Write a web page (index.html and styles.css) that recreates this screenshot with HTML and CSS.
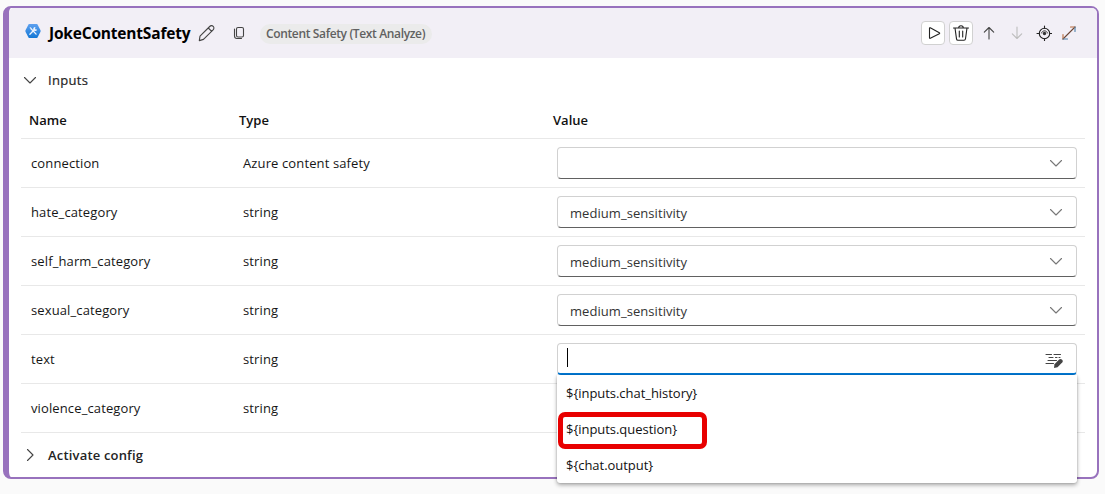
FILE: index.html
```html
<!DOCTYPE html>
<html lang="en">
<head>
<meta charset="utf-8">
<title>JokeContentSafety</title>
<link rel="stylesheet" href="styles.css">
</head>
<body>
<main class="card">
  <header class="head">
    <svg class="tool-icon" width="16" height="16" viewBox="0 0 16 16"><defs><linearGradient id="g" x1="0" y1="0" x2="0" y2="1"><stop offset="0" stop-color="#5ea0ef"/><stop offset="1" stop-color="#1478d6"/></linearGradient></defs><path d="M4.300 1h7.400q.5 0 .8.500l3 5.700q.3.800 0 1.500l-3 5.800q-.3.500-.8.500H4.300q-.5 0-.8-.5l-3-5.800q-.3-.7 0-1.500l3-5.700Q3.800 1 4.300 1Z" fill="url(#g)"/><path d="M4.900 11.200 9 7M6.300 6l4.800 5.100" stroke="#eef5ff" stroke-width="1.300"/><path d="M4.500 4.800 5.400 4 7 5.400 6 6.400Z" fill="#d5e6fb"/><path d="M10.400 4a2 2 0 1 0 1.700 2.400l-1.500.1-.5-.8Z" fill="#eef5ff"/></svg>
    <h1 class="title">JokeContentSafety</h1>
    <svg class="pencil" width="18" height="18" viewBox="0 0 18 18"><path d="m2 12.200 9.700-9.700c1-1 2.500-1.200 3.500-.2s.9 2.500-.1 3.500L5.500 15.400 1.300 16.600ZM10.300 4l3.400 3.400"/></svg>
    <svg class="copy" width="12" height="14" viewBox="0 0 12 14"><rect x="3.500" y="1.500" width="7" height="9.500" rx="1.500"/><path d="M1.500 3v7c0 1.700 1 2.500 2.500 2.500h4.500"/></svg>
    <span class="tag">Content Safety (Text Analyze)</span>
    <div class="actions">
      <button class="btn" aria-label="Run"><svg class="play" width="16" height="16" viewBox="0 0 16 16"><path d="M3.500 3.300v9.500q0 .8.800.5l9-4.600q.8-.5 0-1l-9-4.900q-.8-.3-.8.500Z"/></svg></button>
      <button class="btn" aria-label="Delete"><svg width="18" height="18" viewBox="0 0 18 18"><path d="M1.500 4h15M6.700 4c0-3 4.600-3 4.600 0M3 4l1.500 10.800q.2 1.500 1.500 1.500h6q1.300 0 1.500-1.500L15 4M7.300 7v6M10.700 7v6"/></svg></button>
      <svg class="up" width="12" height="14" viewBox="0 0 12 14"><path d="M6 13V1.500M1.300 6.200 6 1.500l4.700 4.700"/></svg>
      <svg class="down" width="12" height="14" viewBox="0 0 12 14"><path d="M6 1v11.500M1.300 7.800 6 12.500l4.700-4.700"/></svg>
      <svg class="target" width="16" height="16" viewBox="0 0 16 16"><circle cx="8.500" cy="8.500" r="5.200"/><path d="M8.500 1v2.300M8.500 13.700V16M1 8.500h2.300M13.700 8.500H16"/><path d="M5.500 8c1-3 5-3 6 0" stroke-width=".9"/><circle cx="8.500" cy="8.500" r="1.700" fill="#333" stroke="none"/></svg>
      <svg class="expand" width="14" height="14" viewBox="0 0 14 14"><path d="M1 13 13 1" stroke="#6b4636"/><path d="M8.500 1H13M1 8.500V13" stroke="#b8693a"/><path d="M13 1V5.500M1 13h4.500" stroke="#4a7fa8"/></svg>
    </div>
  </header>
  <section class="section-head"><svg width="14" height="14" viewBox="0 0 14 14"><path d="m1.500 4.500 5.500 5.500 5.500-5.500"/></svg><span class="inputs-label">Inputs</span></section>
  <div class="table">
    <div class="row labels"><span>Name</span><span>Type</span><span>Value</span></div>
    <div class="row"><span>connection</span><span>Azure content safety</span><div class="select"><i></i><svg width="14" height="14" viewBox="0 0 14 14"><path d="m1.500 4.500 5.500 5.500 5.500-5.500"/></svg></div></div>
    <div class="row"><span>hate_category</span><span>string</span><div class="select"><b>medium_sensitivity</b><svg width="14" height="14" viewBox="0 0 14 14"><path d="m1.500 4.500 5.500 5.500 5.500-5.500"/></svg></div></div>
    <div class="row"><span>self_harm_category</span><span>string</span><div class="select"><b>medium_sensitivity</b><svg width="14" height="14" viewBox="0 0 14 14"><path d="m1.500 4.500 5.500 5.500 5.500-5.500"/></svg></div></div>
    <div class="row"><span>sexual_category</span><span>string</span><div class="select"><b>medium_sensitivity</b><svg width="14" height="14" viewBox="0 0 14 14"><path d="m1.500 4.500 5.500 5.500 5.500-5.500"/></svg></div></div>
    <div class="row"><span>text</span><span>string</span>
      <div class="select focused"><i class="caret"></i><svg class="edit" width="18" height="16" viewBox="0 0 18 16"><path d="M1 2.500h5.500M9 2.500h6.500M4 5.500h4M10.500 5.500h1.500M14 5.500h1M3 8.500h8.500M1 11.500h7.500"/><path d="m9 16 .5-3.800 4.600-4.600c2-1.700 4.800.9 3.100 2.900L12.500 15.200Z" fill="#444" stroke="none"/></svg>
        <div class="menu"><div>${inputs.chat_history}</div><div class="question">${inputs.question}<em></em></div><div>${chat.output}</div></div>
      </div>
    </div>
    <div class="row"><span>violence_category</span><span>string</span><span></span></div>
  </div>
  <section class="section-head"><svg width="14" height="14" viewBox="0 0 14 14"><path d="m4.500 1.500 5.500 5.500-5.500 5.500"/></svg><span>Activate config</span></section>
</main>
</body>
</html>
```
FILE: styles.css
```css
* { box-sizing: border-box; }
body { margin: 0; padding: 6px 6px 0 3px; height: 494px; overflow: hidden; background: #fafafa; color: #161616; font: 13px/20px "Open Sans", "Noto Sans", sans-serif; }
svg { flex: none; fill: none; stroke: #444; stroke-width: 1.1; stroke-linecap: round; stroke-linejoin: round; }
.card { height: 473px; background: #fff; border: 2px solid #9872bd; border-left-width: 6px; border-radius: 8px; }
.head { display: flex; align-items: center; height: 50px; padding: 0 21px 0 16px; background: #f2eff6; border-radius: 5px 5px 0 0; }
.tool-icon { stroke: none; margin-top: -5px; }
.title { margin: 0 0 0 8px; width: 142px; font-size: 15.5px; line-height: 20px; font-weight: 700; letter-spacing: -.19px; white-space: nowrap; color: #000; }
.pencil { margin-left: 7px; }
.copy { margin-left: 17px; }
.tag { margin: 1px 0 0 15px; width: 172px; height: 20px; padding-left: 6px; border-radius: 10px; background: #ebebeb; color: #616161; font-size: 12px; font-weight: 600; letter-spacing: -.36px; white-space: nowrap; }
.actions { margin-left: auto; display: flex; align-items: center; }
.btn { display: grid; place-items: center; width: 24px; height: 24px; padding: 0; margin-right: 4px; border: 1px solid #d1d1d1; border-radius: 4px; background: #fff; }
.btn svg { stroke: #222; }
.btn .play { margin-left: 1px; }
.up { margin-left: 6px; }
.down { margin-left: 16px; stroke: #bdbdbd; }
.target { margin: 0 10px 0 13px; stroke: #222; }
.section-head { display: flex; align-items: center; height: 44px; padding-left: 14px; gap: 11px; font-weight: 600; letter-spacing: .18px; color: #242424; }
.inputs-label { font-weight: 500; letter-spacing: .3px; -webkit-text-stroke: .2px #242424; }
.table { margin: 0 12px; }
.row { display: grid; grid-template-columns: 212px 314px 520px; align-items: center; height: 49px; padding-left: 10px; border-bottom: 1px solid #e8e8e8; letter-spacing: .12px; color: #161616; }
.labels { height: 37px; grid-template-columns: 210px 314px 1fr; padding-left: 8px; font-weight: 600; letter-spacing: 0; color: #111; }
.select { position: relative; display: flex; align-items: center; justify-content: space-between; height: 32px; padding: 2px 13px 0 12px; border: 1px solid #d1d1d1; border-bottom-color: #616161; border-radius: 4px; background: #fff; }
.select b { font-weight: 400; letter-spacing: .06px; color: #333; }
.select svg { stroke: #777; margin-top: -2px; }
.focused { border-bottom: 2px solid #0078d4; padding-left: 9px; }
.caret { width: 1px; height: 19px; background: #000; margin-top: -5px; }
.focused .edit { stroke: #444; margin-top: 0; }
.menu { position: absolute; z-index: 2; left: -1px; top: 31px; width: 520px; height: 108px; background: #fff; border-radius: 0 0 3px 3px; box-shadow: 0 2px 4px #0005, 0 0 2px #0003; letter-spacing: -.04px; }
.menu div { height: 36px; padding: 8px 9px; color: #111; }
.menu .question { position: relative; }
.question em { position: absolute; left: 1px; top: 1px; width: 149px; height: 37px; border: 5px solid #e80000; border-radius: 7px; }
```
